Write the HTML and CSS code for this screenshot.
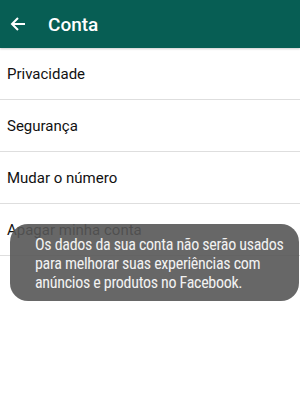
FILE: index.html
```html
<!DOCTYPE html>
<html lang="pt">
<head>
    <meta charset="UTF-8">
    <meta name="viewport" content="width=device-width, initial-scale=1.0">
    <title>Conta</title>
    <link rel="stylesheet" href="styles.css">
</head>
<body>
    <div id="screen">
        <div id="toolbar">
            <svg class="back" width="16" height="16" viewBox="0 0 16 16">
                <path d="M15 8H2M8 2L2 8l6 6" fill="none" stroke="#fff" stroke-width="2"/>
            </svg>
            <h1>Conta</h1>
        </div>

        <div class="row">Privacidade</div>
        <div class="row">Segurança</div>
        <div class="row">Mudar o número</div>
        <div class="row">Apagar minha conta</div>

        <div id="toast">Os dados da sua conta não serão usados para melhorar suas experiências com anúncios e produtos no Facebook.</div>
    </div>
</body>
</html>
```

FILE: styles.css
```css
body {
    margin: 0;
    font-family: Roboto, "Noto Sans", sans-serif;
    background-color: white;
}
#screen {
    position: relative;
    width: 300px;
    height: 420px;
    overflow: hidden;
}
#toolbar {
    height: 48px;
    background-color: #075e54;
    display: flex;
    align-items: center;
    padding-left: 10px;
    box-shadow: 0 1px 2px rgba(0, 0, 0, 0.2);
}
#toolbar .back {
    margin-right: 22px;
}
#toolbar h1 {
    margin: 0;
    color: white;
    font-size: 19px;
    font-weight: 500;
}
.row {
    display: flex;
    align-items: center;
    padding-left: 7px;
    padding-top: 1px;
    box-sizing: border-box;
    height: 52px;
    font-size: 15px;
    color: #111;
    border-bottom: 1px solid #dedede;
}
#toast {
    position: absolute;
    left: 10px;
    top: 224px;
    width: 264px;
    padding: 11px 0px 9px 25px;
    border-radius: 18px;
    background-color: rgba(86, 86, 86, 0.9);
    color: #f2f2f2;
    font-size: 16px;
    font-stretch: 75%;
    letter-spacing: -0.3px;
    line-height: 19px;
}
```
